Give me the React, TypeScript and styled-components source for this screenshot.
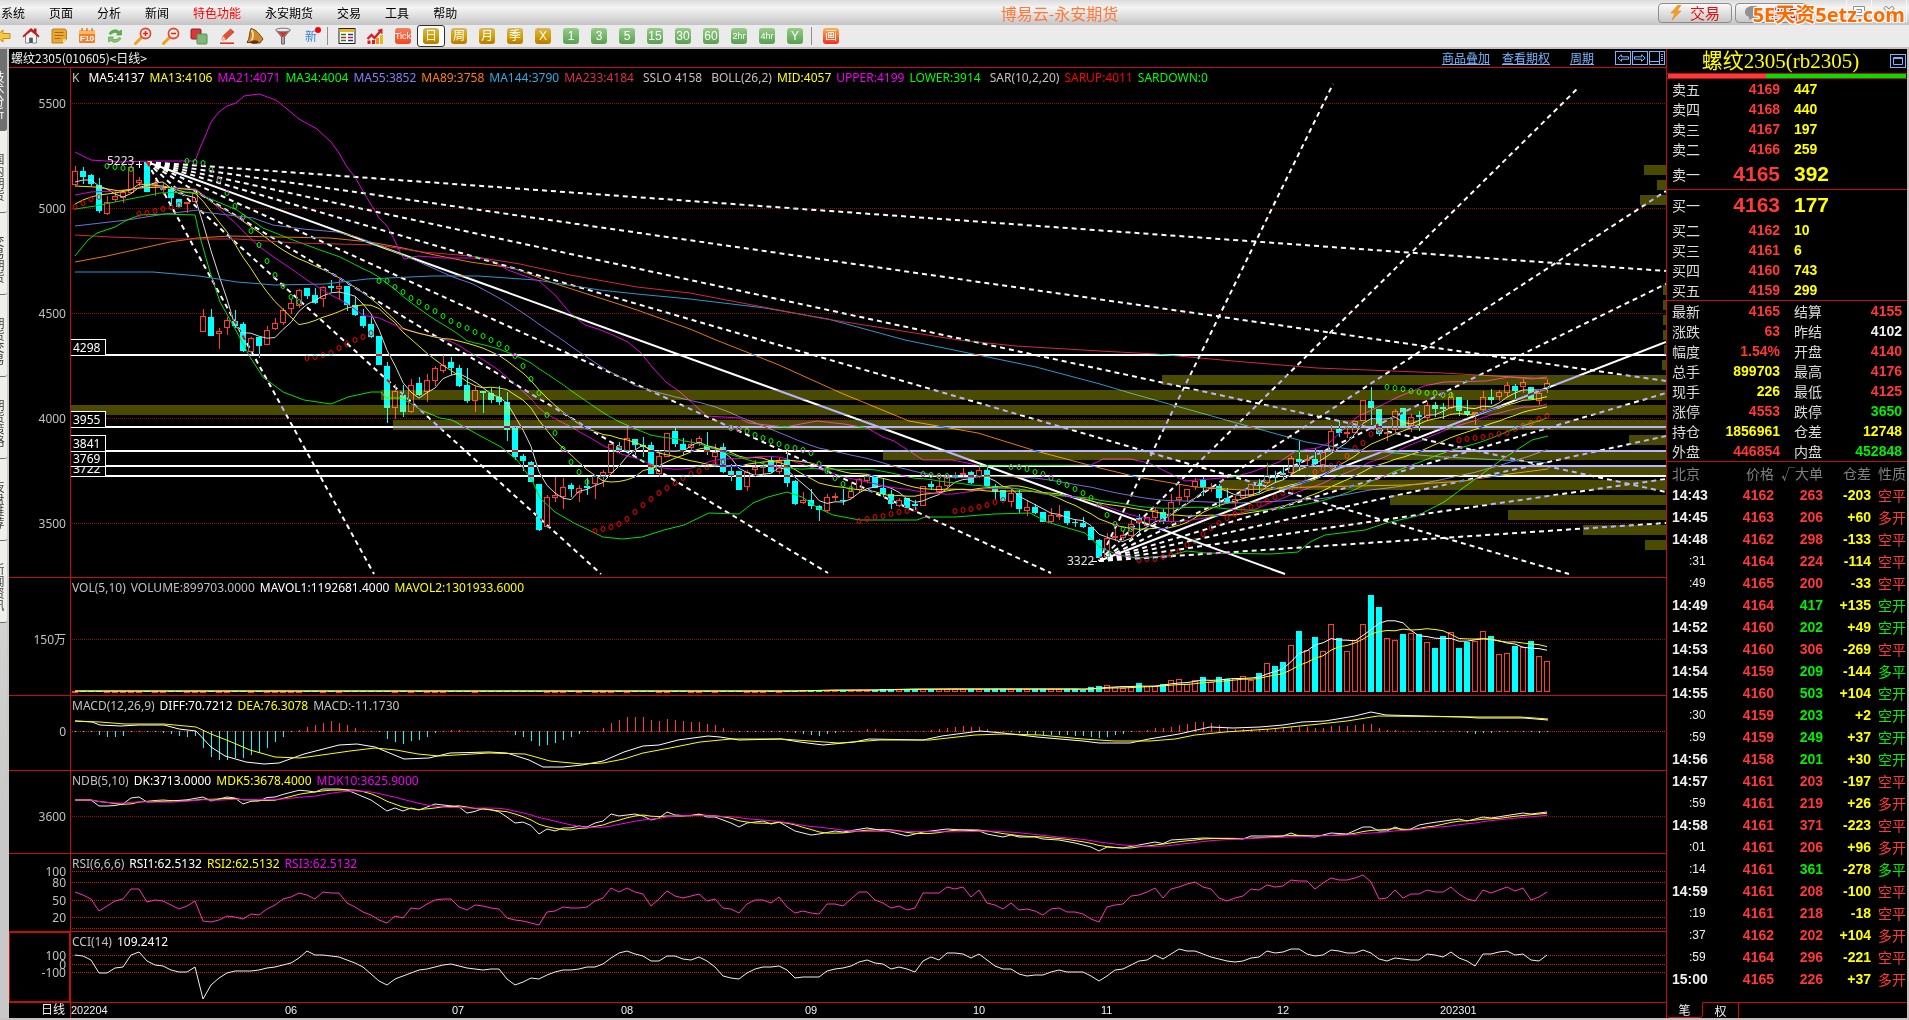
import React from 'react';
import styled, { createGlobalStyle, css } from 'styled-components';

const CJK = "'Noto Sans CJK SC', sans-serif";
const UI = `'Noto Sans', ${CJK}`;
const NUM = `'Liberation Sans', Arial, ${CJK}`;

const C = {
  line: '#c01008',
  red: '#ff3838',
  yellow: '#ffff00',
  green: '#00f000',
  white: '#f0f0f0',
  grey: '#c0c0c0',
  dim: '#808080',
  cyan: '#00ffff',
  magenta: '#f000f0',
  frame: '#c8c0c0',
  link: '#78b4ff',
};

const Global = createGlobalStyle`
  * { box-sizing: border-box; }
  html, body { margin: 0; background: #000; overflow: hidden; }
  button { font: inherit; color: inherit; margin: 0; padding: 0; border: 0; background: none; }
  table { border-collapse: separate; border-spacing: 0; }
`;

/* ---------- frame ---------- */

const Window = styled.div`
  display: flex;
  flex-direction: column;
  height: 100vh;
  color: ${C.white};
  font: 12px/16px ${UI};
  white-space: nowrap;
`;
const TitleBar = styled.header`
  position: relative;
  flex: none;
  display: flex;
  align-items: center;
  height: 25px;
  color: #000;
  font: 12px/16px ${CJK};
  background: linear-gradient(#dcdcdc, #f4f4f4 30%, #e8e8e8 50%, #c4c4c4);
`;
const Menu = styled.nav`
  display: flex;
  gap: 24px;
  padding-left: 1px;
`;
const MenuItem = styled.button<{ $hot?: boolean }>`
  color: ${(p) => (p.$hot ? '#ff0000' : '#000')};
`;
const AppTitle = styled.div`
  flex: 1;
  padding-left: 4px;
  text-align: center;
  font-size: 16px;
  color: #ff7838;
`;
const TopButton = styled.button`
  display: flex;
  align-items: center;
  justify-content: center;
  gap: 8px;
  width: 74px;
  height: 20px;
  margin-right: 3px;
  border: 1px solid #8c8c8c;
  border-radius: 4px;
  background: linear-gradient(#fafafa, #c8c8c8);
  color: #e01010;
  font-size: 15px;
`;
const WinControls = styled.div`
  display: flex;
  margin-left: 10px;
  margin-right: 2px;
  height: 22px;
  align-self: flex-start;
`;
const WinButton = styled.button`
  display: flex;
  align-items: center;
  justify-content: center;
  width: 25px;
  border: 1px solid #f8f8f8;
  border-top: 0;
  border-left: 0;
  &:last-child { width: 35px; }
`;
const Watermark = styled.div`
  position: absolute;
  right: 4px;
  top: 2px;
  font: bold 20px/25px 'Open Sans', ${CJK};
  color: #ff6a00;
  text-shadow: 1px 1px 0 #fff, -1px -1px 0 #fff, 1px -1px 0 #fff, -1px 1px 0 #fff;
  pointer-events: none;
`;

/* ---------- tool bar ---------- */

const ToolBar = styled.div`
  flex: none;
  display: flex;
  align-items: center;
  height: 24px;
  padding-right: 12px;
  overflow: hidden;
  background: #ebebeb;
  border-bottom: 2px solid ${C.frame};
`;
const ToolStart = styled.div`
  display: flex;
  flex: none;
  margin-left: -11px;
`;
const ToolButton = styled.button<{ $on?: boolean }>`
  display: flex;
  align-items: center;
  justify-content: center;
  width: 28px;
  height: 22px;
  ${(p) => p.$on && css`
    border: 1px solid #303030;
    border-radius: 3px;
    background: #fff;
  `}
`;
const Divider = styled.div`
  width: 6px;
  height: 18px;
  margin: 2px 0 0 2px;
  border-left: 1px solid #909090;
`;
const tones = {
  gold: 'linear-gradient(#d8b860, #d0a000 55%, #b87800)',
  green: 'linear-gradient(#98cc88, #58a050)',
  red: 'linear-gradient(#f08060, #f04820)',
  orange: 'linear-gradient(#ffb050, #f03020)',
};
const Tile = styled.span<{ $tone: keyof typeof tones; $small?: boolean }>`
  display: flex;
  align-items: center;
  justify-content: center;
  width: 16px;
  height: 16px;
  border-radius: 3px;
  background: ${(p) => tones[p.$tone]};
  color: #fff;
  font: ${(p) => (p.$small ? '9px' : '12px')}/16px 'Liberation Sans', ${CJK};
`;
const NewMark = styled.span`
  position: relative;
  color: #3c82dc;
  font: 12px/16px ${CJK};
  &::after {
    content: '';
    position: absolute;
    right: -4px;
    top: -1px;
    width: 6px;
    height: 6px;
    border-radius: 50%;
    background: #ff0000;
  }
`;

/* ---------- work area ---------- */

const Work = styled.div`
  flex: 1;
  min-height: 0;
  display: grid;
  grid-template-columns: 9px minmax(0, 1fr) 241px;
  border-right: 2px solid ${C.frame};
  border-bottom: 2px solid ${C.frame};
  background: #000;
`;
const SideBar = styled.nav`
  display: flex;
  flex-direction: column;
  overflow: hidden;
  border-right: 2px solid #c8c8c8;
  background: linear-gradient(#f0f0ea, #c8c8c8 80%);
`;
const SideTab = styled.button<{ $on?: boolean }>`
  flex: none;
  display: flex;
  justify-content: flex-end;
  height: 82px;
  padding: 10px 2px 0 0;
  border-bottom: 1px solid #707070;
  border-bottom-right-radius: 3px;
  background: ${(p) => (p.$on ? '#707070' : '#f0f0ea')};
  color: ${(p) => (p.$on ? '#fff' : '#404040')};
  font: 12px/14px ${CJK};
  & > span { writing-mode: vertical-rl; width: 14px; flex: none; }
`;

const Charts = styled.main`
  display: grid;
  grid-template-rows: 19px 510fr 118fr 75fr 83fr 78fr 71fr 15px;
  min-height: 0;
`;
const ChartHead = styled.div`
  display: flex;
  align-items: center;
  padding: 0 1px 0 2px;
  border-bottom: 1px solid ${C.line};
  font: 12px/16px ${CJK};
`;
const HeadLinks = styled.div`
  display: flex;
  align-items: center;
  margin-left: auto;
  gap: 12px;
`;
const HeadLink = styled.a<{ $wide?: boolean }>`
  color: ${C.link};
  ${(p) => p.$wide && css`margin: 0 9px 0 8px;`}
`;
const BoxButtons = styled.div`
  display: flex;
  gap: 1px;
`;
const BoxButton = styled.button`
  display: flex;
  align-items: center;
  justify-content: center;
  width: 16px;
  height: 14px;
  border: 1px solid ${C.link};
  color: ${C.link};
`;
const Pane = styled.section`
  display: grid;
  grid-template-columns: 62px minmax(0, 1fr);
  min-height: 0;
  border-bottom: 1px solid ${C.line};
`;
const Gutter = styled.div<{ $active?: boolean }>`
  position: relative;
  border-right: 1px solid ${C.line};
  color: ${C.grey};
  ${(p) => p.$active && css`box-shadow: inset 0 0 0 1px ${C.line};`}
`;
const Tick = styled.span`
  position: absolute;
  right: 4px;
  margin-top: -7px;
  line-height: 16px;
`;
const Plot = styled.div`
  position: relative;
  min-width: 0;
  min-height: 0;
  overflow: hidden;
`;
const Canvas = styled.svg`
  position: absolute;
  inset: 0;
  width: 100%;
  height: 100%;
`;
const Inverted = styled.g`
  mix-blend-mode: difference;
`;
const Legend = styled.div`
  position: relative;
  display: flex;
  gap: 5px;
  padding: 2px 0 0 1px;
`;
const Item = styled.span<{ $c?: string; $gap?: boolean }>`
  color: ${(p) => p.$c || C.grey};
  ${(p) => p.$gap && css`margin-left: 4px;`}
`;
const Level = styled.span`
  position: absolute;
  left: 0;
  width: 35px;
  height: 17px;
  margin-top: -16px;
  padding-left: 2px;
  border: 1px solid #fff;
  border-left: 0;
  background: #000;
  line-height: 16px;
  color: #fff;
`;
const Extreme = styled.span`
  position: absolute;
  margin-top: -8px;
  color: #e0e0e0;
  line-height: 16px;
`;
const TimeAxis = styled.div`
  display: grid;
  grid-template-columns: 62px minmax(0, 1fr);
  font: 12px/15px ${NUM};
`;
const PeriodName = styled.div`
  padding-right: 5px;
  border-right: 1px solid ${C.line};
  text-align: right;
`;
const Months = styled.div`
  display: grid;
  grid-template-columns: 214fr 167fr 169fr 184fr 168fr 128fr 176fr 163fr 226fr;
  font-size: 11px;
`;

/* ---------- quote panel ---------- */

const Panel = styled.aside`
  display: flex;
  flex-direction: column;
  min-height: 0;
  border-left: 1px solid ${C.line};
  font: 14px/20px ${CJK};
`;
const PanelTitle = styled.div`
  display: flex;
  align-items: center;
  justify-content: flex-end;
  height: 25px;
  padding-right: 1px;
  border-bottom: 1px solid ${C.line};
`;
const Contract = styled.h1`
  flex: 1;
  margin: 0;
  padding-left: 4px;
  text-align: center;
  font: 21px/24px 'Liberation Serif', ${CJK};
  color: ${C.yellow};
`;
const Balance = styled.div`
  display: flex;
  height: 5px;
  padding: 0 1px;
  border-bottom: 1px solid ${C.line};
`;
const BalancePart = styled.i<{ $c: string; $share: number }>`
  flex: ${(p) => p.$share};
  background: ${(p) => p.$c};
`;
const Sheet = styled.table<{ $line?: boolean }>`
  width: 100%;
  table-layout: fixed;
  ${(p) => p.$line && css`border-bottom: 1px solid ${C.line};`}
`;
const Col = styled.col<{ $w?: number }>`
  ${(p) => p.$w && css`width: ${p.$w}px;`}
`;
const Row = styled.tr<{ $h?: number }>`
  height: ${(p) => p.$h || 20}px;
`;
const Label = styled.th<{ $pad?: number; $c?: string; $right?: boolean }>`
  padding: 0 0 0 ${(p) => p.$pad || 0}px;
  line-height: 18px;
  font-weight: 400;
  text-align: ${(p) => (p.$right ? 'right' : 'left')};
  color: ${(p) => p.$c || '#dcdcdc'};
`;
const Num = styled.td<{ $c: string; $big?: boolean; $left?: boolean; $end?: boolean }>`
  padding: 0 ${(p) => (p.$end ? 5 : 0)}px 0 ${(p) => (p.$left ? 14 : 0)}px;
  font: bold ${(p) => (p.$big ? 21 : 14)}px/18px ${NUM};
  text-align: ${(p) => (p.$left ? 'left' : 'right')};
  color: ${(p) => p.$c};
`;
const Time = styled.td<{ $sub?: boolean }>`
  padding: 0 0 0 ${(p) => (p.$sub ? 22 : 5)}px;
  font: ${(p) => (p.$sub ? '12px' : 'bold 14px')}/18px ${NUM};
  color: ${C.white};
`;
const Kind = styled.td<{ $c: string }>`
  padding: 0 0 0 7px;
  line-height: 18px;
  color: ${(p) => p.$c};
`;
const Tabs = styled.div`
  display: flex;
  height: 16px;
  margin-top: auto;
`;
const Tab = styled.button<{ $on?: boolean }>`
  width: 36px;
  border: 1px solid ${C.line};
  font: 12px/14px ${CJK};
  ${(p) => p.$on ? css`
    border-top-color: transparent;
    border-left: 0;
    border-radius: 0 0 4px 4px;
  ` : css`
    border-bottom: 0;
    border-left: 0;
  `}
`;
const TabRest = styled.div`
  flex: 1;
  border-top: 1px solid ${C.line};
`;

/* ---------- chart data: positions on the chart canvas ---------- */

const X0 = 75;
const STEP = 8;
const xAt = (i: number) => X0 + i * STEP;

// kind, high, body top, body bottom, low
const CANDLES = `r166 171 185 186,c167 171 177 184,c174 175 184 186,c178 185 211 213,r196 202 214 215,r191 196 200 202,r190 192 198 203,r165 167 193 194,r177 180 183 186,c161 162 192 192
r180 183 184 196,r183 188 190 195,c186 189 198 205,c199 199 207 207,r202 202 203 213,r191 193 202 203,r309 316 332 332,c309 317 336 336,r328 331 334 349,r317 320 328 335
c310 321 326 328,c322 324 351 352,r337 338 352 355,c337 337 346 358,r326 330 345 345,r318 323 329 330,r308 310 323 325,r300 303 309 314,r289 290 306 308,c288 288 296 299
c288 295 303 304,r286 287 299 307,c280 286 288 292,r280 286 289 300,c286 286 305 311,c297 305 315 316,c309 316 326 328,c316 324 337 338,c336 336 365 365,c362 366 408 423
r384 391 408 419,c385 395 412 417,r379 385 412 413,c377 383 395 396,r374 380 392 402,r366 368 381 386,r355 365 371 373,c357 362 368 375,c365 368 386 387,c368 385 401 403
r386 390 401 412,c391 391 393 413,c388 393 400 403,c386 397 402 405,c392 402 430 441,c427 428 457 460,c454 456 461 471,c461 462 482 482,c484 484 530 531,r495 497 527 528
r477 495 498 502,r478 487 497 509,c483 485 489 497,r485 488 493 502,c478 486 488 495,r475 476 484 499,r470 472 477 487,r443 444 473 474,c442 446 451 453,r428 438 451 452
c439 439 445 455,c437 445 447 457,c442 445 474 474,r450 456 474 477,r433 433 457 457,c428 431 444 447,c438 444 451 455,r439 444 448 452,r436 438 443 446,c432 446 452 455
r444 452 457 464,c443 447 472 473,c464 471 476 481,c471 471 490 490,r470 472 487 491,r460 467 470 477,r462 466 468 476,c457 460 472 473,r458 461 472 474,c451 460 483 487
c480 481 504 505,r492 500 503 504,c489 500 506 509,c505 506 510 521,r494 497 511 512,r493 496 498 501,c489 500 501 505,r483 491 498 499,r478 479 490 493,r474 476 481 483
c477 477 488 488,c478 488 494 497,c490 494 504 509,r498 500 506 507,c498 498 508 508,c500 504 506 510,r486 486 506 506,c481 484 487 490,r478 486 492 494,r475 477 486 487
r472 475 477 479,r468 473 475 477,c471 472 483 484,r466 470 476 478,c465 470 486 487,c484 486 492 500,c490 490 501 501,r489 493 502 507,c490 493 509 513,r500 507 511 516
c504 507 513 514,c512 512 522 522,r508 515 522 523,r505 515 517 520,c511 511 523 525,c519 522 523 527,c517 523 527 528,c527 527 540 540,c539 540 558 560,r533 538 557 560
r529 536 537 541,r530 535 538 540,r520 524 536 538,c514 518 523 533,r517 517 526 526,r508 510 518 520,c509 512 522 524,r494 502 522 523,r484 497 500 505,r489 489 497 502
r478 481 487 490,c477 480 487 496,r483 487 489 492,c484 486 498 507,c488 498 503 504,r496 499 503 508,r490 490 498 498,r484 484 496 496,c479 483 486 493,r463 475 483 484
c471 477 478 482,c467 473 476 479,r456 458 473 474,c441 459 462 471,r455 459 461 465,c448 459 464 466,r450 452 465 466,r425 431 450 452,c420 429 433 437,r427 432 433 438
r421 421 433 433,r400 400 421 421,c387 401 408 425,c409 409 434 436,r428 432 434 441,r409 411 430 433,c408 408 426 426,r414 417 426 432,c411 415 417 431,r402 405 418 420
c402 405 409 417,c403 407 409 419,r392 397 408 409,c397 397 411 416,c400 411 414 416,r412 412 413 425,r391 397 410 412,c389 397 400 404,r390 392 397 401,r382 385 393 397
c384 386 391 400,r379 382 387 393,c387 387 399 399,r390 393 401 405,r380 383 388 393`
  .split(/[,\n]/)
  .map((s) => {
    const [hi, top, bot, lo] = s.slice(1).split(' ').map(Number);
    return { up: s[0] === 'r', hi, top, bot, lo };
  });
const CLOSES = CANDLES.map((c) => (c.up ? c.top : c.bot));

const average = (v: number[], n: number, from = n - 1) =>
  v.map((_, i) => {
    const part = v.slice(Math.max(0, i - n + 1), i + 1);
    return part.reduce((a, b) => a + b, 0) / part.length;
  }).slice(from);
const series = (v: number[], from = 0) => v.map((y, i) => `${xAt(i + from)},${y.toFixed(1)}`).join(' ');
const maLine = (early: string, n: number) => `${early} ${series(average(CLOSES, n), n - 1)}`;

const CURVES: [string, string][] = [
  ['#d8d8d8', maLine('75,182 83,180 91,180 99,186', 5)],
  ['#e8e800', maLine('75,204 83,200 91,197 99,195 115,193 131,190 139,184 163,186', 13)],
  ['#d800d8', maLine('75,195 91,192 115,191 139,188 150,187 180,188 196,189 213,203 227,216', 21)],
  ['#e8e800', maLine('75,186 95,187 120,191 139,188 160,187 196,190 213,203 237,217 260,233', 26)],
  ['#00d800', maLine('75,209 95,206 125,200 145,196 160,193 190,192 199,194 237,210 263,228 293,240 320,250', 34)],
  ['#7070d8', maLine('75,226 127,220 165,214 198,210 203,212 253,218 273,225 303,229 337,232 357,237 383,247 417,261 453,277 473,284 490,293', 55)],
  ['#e87800', '75,262 107,256 170,242 197,238 230,236 330,238 370,242 403,248 430,254 470,262 513,268 553,283 637,310 690,329 716,340 749,353 779,365 841,393 909,421 978,433 1036,451 1100,468 1137,477 1195,487 1241,490 1310,487 1405,485 1463,481 1509,474 1548,469'],
  ['#2898d0', '75,272 153,272 199,276 237,282 275,285 325,284 367,279 432,276 478,276 536,280 600,290 637,294 690,299 765,308 828,319 905,340 978,355 1036,367 1100,384 1130,393 1233,422 1306,442 1348,449 1443,457 1539,462 1547,463'],
  ['#d02848', '75,235 110,237 170,239 237,239 297,243 377,245 423,252 470,256 520,264 570,275 637,287 690,293 820,318 959,340 1016,346 1100,351 1156,354 1233,361 1317,368 1443,373 1548,379'],
  ['#e000e0', '75,152 91,160 120,162 150,161 195,161 200,148 204,139 211,122 219,112 227,106 236,103 244,96 259,94 276,100 299,119 317,129 331,142 339,153 347,167 355,177 364,193 372,206 379,218 387,226 394,239 399,250 404,259 418,256 443,258 480,258 495,262 508,270 522,275 539,281 555,295 570,313 585,325 598,329 613,335 628,342 641,353 653,368 666,382 680,392 707,416 739,418 749,423 785,427 817,421 844,424 867,428 883,437 894,441 923,460 952,460 982,466 1091,465 1103,459 1130,459 1149,463 1185,481 1233,477 1252,472 1279,462 1296,451 1317,448 1329,443 1344,429 1357,417 1378,407 1398,397 1424,386 1444,382 1486,381 1509,377 1532,379 1547,377'],
  ['#00e000', '75,256 88,240 97,233 115,227 127,220 140,215 165,214 195,215 200,237 210,272 220,302 233,325 250,357 263,377 283,392 304,400 331,404 348,397 371,392 381,392 386,398 402,398 421,410 440,418 452,420 475,433 501,447 517,460 532,480 540,498 555,512 574,523 603,537 622,539 642,537 664,530 684,525 709,513 739,514 753,503 768,497 787,492 802,497 818,508 833,515 860,520 917,520 925,517 955,517 994,514 1030,513 1047,522 1085,533 1100,547 1118,555 1137,558 1168,556 1187,551 1206,553 1271,554 1298,552 1310,542 1325,535 1365,530 1386,523 1417,516 1444,502 1501,460 1532,440 1548,436'],
];

// first bar, falling trend?, marks
const SAR: [number, boolean, number[]][] = [
  [0, false, [207, 203, 199, 197]],
  [4, true, [166, 167, 168, 169]],
  [8, false, [214, 213, 211, 209, 207, 205]],
  [14, true, [161, 162, 163, 170, 180, 193, 206, 217, 231, 245, 261, 275, 286, 297, 302]],
  [29, false, [358, 357, 355, 353, 348, 344, 340, 337, 333]],
  [38, true, [281, 281, 287, 292, 298, 302, 307, 311, 316, 321, 325, 328, 332, 336, 340, 344, 348, 356, 366, 379, 393, 415, 433, 449, 462, 472, 482]],
  [65, false, [531, 529, 527, 524, 519, 512, 505, 499, 493, 488, 483, 478, 474, 471, 467, 464, 462]],
  [82, true, [428, 429, 431, 435, 438, 441, 444, 447, 448, 450, 453, 464, 471, 478, 484, 489]],
  [98, false, [521, 519, 517, 516, 514, 512, 511, 509]],
  [106, true, [474, 475, 476, 476]],
  [110, false, [511, 510, 509, 507, 505, 502, 500]],
  [117, true, [467, 467, 469, 472, 474, 478, 482, 485, 489, 493, 498, 505, 515, 524, 529, 529]],
  [133, false, [560, 559, 559, 557, 555, 551, 545, 541, 534, 528, 523, 518, 514, 510, 507, 504, 501, 497, 493, 491, 485, 478, 472, 469, 466, 464, 456, 448, 443, 434, 430]],
  [164, true, [387, 388, 389, 391, 392, 393, 393, 395, 395]],
  [173, false, [440, 439, 438, 437, 436, 434, 433, 429, 426, 423, 419, 416]],
];

// price distribution: left end and top of each bar
const PROFILE = [
  [1644, 165], [1657, 180], [1640, 195], [1663, 285], [1663, 300], [1663, 315], [1663, 330], [1664, 345], [1662, 360],
  [1162, 375], [381, 390], [71, 405], [393, 420], [1629, 435], [883, 450], [1292, 465], [1220, 480], [1390, 495],
  [1508, 510], [1583, 525], [1645, 540],
];

const FANS: { x: number; y: number; ends: [number, number][] }[] = [
  { x: 147, y: 162, ends: [[1666, 271], [1666, 381], [1666, 492], [1569, 574], [1285, 574], [1051, 573], [828, 573], [601, 574], [374, 574]] },
  { x: 1099, y: 561, ends: [[1333, 84], [1579, 87], [1666, 191], [1666, 284], [1666, 342], [1666, 393], [1666, 436], [1666, 479], [1666, 523]] },
];
const LEVELS: [string, number][] = [['3722', 476], ['3769', 466], ['3841', 451], ['3955', 427], ['4298', 355]];

const VOL_TOPS = [690, 687, 686, 685, 687, 688, 687, 683, 686, 686, 684, 680, 679, 684, 680, 677, 682, 677, 679, 678, 676, 680, 673, 663, 666, 662, 645, 631, 650, 637, 651, 624, 638, 651, 640, 624, 595, 607, 638, 640, 634, 633, 634, 642, 648, 636, 632, 648, 642, 641, 631, 636, 654, 653, 646, 647, 641, 656, 661];
const VOLUME = CANDLES.map((_, i) => {
  if (i >= 126) return VOL_TOPS[i - 126];
  if (i > 100) return 689;
  return i > 90 ? 690 : 691;
});

const MACD_HIST = [-1, -1, -1, -4, -6, -6, -5, -1, 1, -1, -1, -2, -3, -5, -6, -5, -17, -26, -29, -29, -27, -27, -24, -22, -17, -11, -6, -1, 2, 5, 7, 9, 11, 9, 7, 4, 1, 1, -1, -8, -11, -13, -10, -9, -6, -2, 1, 2, 2, 1, 1, 1, 1, 1, 1, -4, -6, -10, -15, -14, -12, -9, -6, -3, -1, 1, 4, 9, 12, 15, 15, 15, 12, 11, 13, 12, 11, 10, 10, 8, 7, 4, 1, -1, -1, -1, -1, -1, -1, -1, -2, -3, -4, -5, -3, -2, -1, -1, 1, 3, 3, 2, 1, 1, 1, 1, 1, 2, 3, 4, 5, 6, 5, 5, 3, 1, 1, -1, -2, -3, -4, -4, -4, -4, -4, -5, -5, -6, -7, -6, -4, -3, -1, 1, 2, 4, 4, 5, 7, 8, 10, 10, 9, 7, 4, 3, 3, 3, 3, 3, 3, 4, 5, 5, 5, 4, 4, 6, 6, 6, 7, 8, 8, 4, 2, 2, 1, 1, -1, 1, -1, -1, 1, -1, -2, -3, -2, -2, -1, -1, 1, -1, -1, -2, -1];
const DIFF = '75,721 92,722 100,725 121,726 139,725 164,725 179,729 196,731 211,747 225,756 246,762 264,764 279,763 304,754 339,745 357,744 375,747 404,759 429,758 450,753 489,752 507,753 529,760 543,767 563,767 582,765 603,761 624,752 643,746 659,745 678,740 708,736 720,737 739,740 781,739 800,742 823,745 854,742 869,739 923,740 942,736 980,731 1003,733 1037,737 1083,741 1099,743 1130,743 1149,739 1179,734 1210,727 1233,728 1260,727 1283,725 1302,722 1325,721 1355,716 1371,712 1386,715 1424,716 1463,717 1478,718 1524,718 1548,720';
const DEA = '75,721 100,722 125,724 164,724 196,727 211,734 229,741 250,750 275,757 300,758 329,754 350,751 375,748 396,750 418,754 439,756 489,753 525,754 550,761 582,764 603,763 624,759 643,753 670,748 700,742 731,739 781,739 810,741 839,743 880,740 930,740 975,735 1003,734 1040,735 1083,739 1115,741 1150,741 1175,739 1195,735 1225,732 1270,729 1310,725 1347,721 1378,716 1480,717 1520,717 1548,719';

const DK_POINTS = '75,800 92,800 99,806 112,806 123,804 131,798 139,797 147,802 170,801 186,800 203,797 211,801 227,797 235,798 243,804 252,801 260,801 268,797 277,797 284,794 300,790 315,792 323,789 340,789 347,790 371,800 387,811 395,808 403,811 411,808 419,810 435,804 460,807 468,814 484,808 500,812 515,823 524,822 532,826 539,834 547,829 555,831 563,828 570,828 579,826 587,827 595,823 603,821 611,814 619,816 635,814 643,816 651,820 659,818 667,812 675,815 690,816 699,814 707,817 715,817 723,820 731,823 739,827 747,823 763,821 771,824 779,822 795,831 811,835 819,834 835,831 843,832 867,828 891,832 907,836 923,832 947,829 980,831 987,834 1003,837 1011,835 1019,837 1035,837 1043,839 1059,840 1075,843 1091,847 1099,851 1107,847 1123,848 1139,845 1155,842 1165,844 1171,840 1203,838 1243,839 1251,836 1283,836 1291,833 1299,836 1315,837 1331,833 1347,834 1363,827 1371,827 1379,831 1387,831 1395,827 1403,830 1411,829 1419,825 1430,823 1459,819 1467,821 1483,817 1491,818 1523,813 1531,814 1547,812'
  .split(' ').map((p) => p.split(',').map(Number));
const DK = CANDLES.map((_, i) => {
  const x = xAt(i);
  const k = Math.max(1, DK_POINTS.findIndex((p) => p[0] >= x));
  const [a, b] = [DK_POINTS[k - 1], DK_POINTS[k]];
  return a[1] + ((b[1] - a[1]) * (x - a[0])) / (b[0] - a[0]);
});

const RSI = [892, 895, 899, 911, 906, 901, 899, 889, 889, 902, 900, 901, 905, 909, 906, 901, 921, 922, 920, 916, 917, 919, 914, 915, 909, 905, 899, 897, 893, 895, 899, 892, 893, 893, 903, 907, 912, 915, 920, 923, 916, 918, 908, 909, 904, 900, 899, 899, 907, 910, 905, 906, 908, 909, 918, 920, 921, 923, 925, 912, 911, 907, 908, 908, 907, 901, 898, 888, 892, 888, 892, 894, 906, 899, 891, 896, 898, 896, 894, 901, 899, 908, 909, 913, 904, 900, 900, 903, 897, 907, 913, 911, 913, 914, 904, 904, 906, 899, 892, 892, 900, 903, 908, 906, 910, 908, 893, 893, 893, 887, 889, 887, 897, 890, 903, 905, 909, 903, 910, 909, 911, 915, 909, 908, 912, 912, 914, 919, 922, 907, 905, 904, 896, 895, 892, 888, 898, 889, 887, 884, 882, 887, 889, 898, 901, 898, 896, 889, 890, 885, 887, 886, 880, 881, 881, 889, 883, 878, 880, 880, 878, 875, 882, 899, 898, 890, 898, 894, 894, 890, 892, 892, 887, 894, 899, 901, 890, 893, 890, 887, 891, 888, 900, 897, 892];
const CCI = [955, 956, 960, 973, 973, 968, 967, 955, 952, 961, 965, 966, 970, 972, 972, 967, 999, 985, 978, 973, 971, 971, 971, 970, 968, 967, 965, 963, 958, 951, 955, 955, 956, 957, 960, 963, 967, 974, 981, 985, 979, 976, 973, 970, 969, 967, 965, 964, 966, 968, 969, 970, 969, 969, 979, 985, 982, 978, 979, 975, 972, 970, 970, 969, 967, 967, 964, 958, 953, 951, 954, 956, 961, 961, 956, 956, 959, 960, 957, 961, 967, 976, 978, 979, 973, 969, 967, 967, 966, 970, 978, 977, 977, 977, 971, 969, 968, 966, 962, 960, 963, 964, 969, 967, 969, 972, 961, 957, 960, 953, 953, 954, 958, 954, 960, 966, 969, 969, 974, 976, 975, 975, 972, 970, 972, 972, 972, 976, 981, 976, 970, 969, 965, 961, 960, 955, 959, 954, 949, 951, 951, 954, 957, 959, 961, 962, 961, 958, 957, 951, 953, 952, 949, 949, 954, 956, 955, 950, 951, 953, 953, 950, 953, 959, 961, 958, 959, 960, 960, 954, 955, 957, 952, 958, 961, 966, 954, 954, 952, 951, 955, 954, 960, 961, 955];

/* ---------- chart pieces ---------- */

const LEFT = 71;
const WIDTH = 1595;

type ChartPaneProps = {
  top: number;
  height: number;
  ticks: [string, number][];
  grid?: number[];
  bright?: boolean;
  active?: boolean;
  legend: React.ReactNode;
  over?: React.ReactNode;
  children: React.ReactNode;
};

function ChartPane({ top, height, ticks, grid, bright, active, legend, over, children }: ChartPaneProps) {
  const share = (y: number) => `${((y - top) / height) * 100}%`;
  return (
    <Pane>
      <Gutter $active={active}>
        {ticks.map(([t, y]) => <Tick key={t} style={{ top: share(y) }}>{t}</Tick>)}
      </Gutter>
      <Plot>
        <Canvas viewBox={`${LEFT} ${top} ${WIDTH} ${height}`} preserveAspectRatio="none">
          {(grid || ticks.map((t) => t[1])).map((y) => (
            <line key={y} x1={LEFT + 1} x2={LEFT + WIDTH} y1={y + 0.5} y2={y + 0.5} stroke={bright ? '#d01808' : '#980808'} strokeDasharray="1 1" shapeRendering="crispEdges" />
          ))}
          {children}
        </Canvas>
        <Legend>{legend}</Legend>
        {over}
      </Plot>
    </Pane>
  );
}

const Curve = ({ c, pts }: { c: string; pts: string }) => <polyline points={pts} fill="none" stroke={c} strokeWidth="1" />;

function PriceChart() {
  const share = (y: number) => `${((y - 68) / 509) * 100}%`;
  const across = (x: number) => `${((x - LEFT) / WIDTH) * 100}%`;
  return (
    <ChartPane
      top={68}
      height={509}
      ticks={[['5500', 103], ['5000', 208], ['4500', 313], ['4000', 418], ['3500', 523]]}
      legend={<>
        <Item>K</Item>
        <Item $c="#fff" $gap>MA5:4137</Item>
        <Item $c={C.yellow}>MA13:4106</Item>
        <Item $c={C.magenta}>MA21:4071</Item>
        <Item $c="#00ff00">MA34:4004</Item>
        <Item $c="#8080f0">MA55:3852</Item>
        <Item $c="#ff8000">MA89:3758</Item>
        <Item $c="#30a8e0">MA144:3790</Item>
        <Item $c="#d83050">MA233:4184</Item>
        <Item $gap>SSLO 4158</Item>
        <Item $gap>BOLL(26,2)</Item>
        <Item $c={C.yellow}>MID:4057</Item>
        <Item $c={C.magenta}>UPPER:4199</Item>
        <Item $c="#00ff00">LOWER:3914</Item>
        <Item $gap>SAR(10,2,20)</Item>
        <Item $c="#ff0000">SARUP:4011</Item>
        <Item $c="#00ff00">SARDOWN:0</Item>
      </>}
      over={<>
        {LEVELS.map(([t, y]) => <Level key={t} style={{ top: share(y) }}>{t}</Level>)}
        <Extreme style={{ left: across(107), top: share(161) }}>5223</Extreme>
        <Extreme style={{ left: across(1067), top: share(561) }}>3322</Extreme>
      </>}
    >
      <g shapeRendering="crispEdges">
        {CANDLES.map((k, i) => {
          const x = xAt(i);
          return k.up ? (
            <g key={i} fill="#ff3c30">
              <rect x={x} y={k.hi} width="1" height={Math.max(0, k.top - k.hi)} />
              <rect x={x} y={k.bot} width="1" height={Math.max(0, k.lo - k.bot)} />
              <rect x={x - 2.5} y={k.top + 0.5} width="5" height={Math.max(1, k.bot - k.top - 1)} fill="none" stroke="#ff3c30" />
            </g>
          ) : (
            <g key={i} fill={C.cyan}>
              <rect x={x} y={k.hi} width="1" height={k.lo - k.hi} />
              <rect x={x - 3} y={k.top} width="6" height={k.bot - k.top} />
            </g>
          );
        })}
      </g>
      {CURVES.map(([c, pts], i) => <Curve key={i} c={c} pts={pts} />)}
      {SAR.map(([from, falling, ys]) => ys.map((y, i) => (
        <ellipse key={`${from}-${i}`} cx={xAt(from + i)} cy={y} rx="2" ry="2.5" fill="none" stroke={falling ? '#00ff00' : '#ff0000'} />
      )))}
      <g fill="#ffff00" fillOpacity="0.29" shapeRendering="crispEdges">
        {PROFILE.map(([x, y]) => <rect key={y} x={x} y={y} width={1666 - x} height="10" />)}
      </g>
      <Inverted stroke="#fff" strokeWidth="2">
        {LEVELS.map(([t, y]) => <line key={t} x1={LEFT} x2="1666" y1={y} y2={y} />)}
        {FANS.map((f) => f.ends.map(([x, y], i) => (
          <line key={`${f.x}-${i}`} x1={f.x} y1={f.y} x2={x} y2={y} strokeDasharray={i === 4 ? undefined : '5 4'} />
        )))}
      </Inverted>
      <path d="M136 164.500h6M139.500 161v7M1091 561.500h6" stroke="#fff" />
    </ChartPane>
  );
}

function VolumeChart() {
  return (
    <ChartPane
      top={578}
      height={117}
      ticks={[['150万', 639]]}
      legend={<>
        <Item>VOL(5,10)</Item><Item>VOLUME:899703.0000</Item>
        <Item $c="#fff">MAVOL1:1192681.4000</Item><Item $c={C.yellow}>MAVOL2:1301933.6000</Item>
      </>}
    >
      <g shapeRendering="crispEdges">
        {VOLUME.map((y, i) => CANDLES[i].up
          ? <rect key={i} x={xAt(i) - 2.5} y={y + 0.5} width="5" height={Math.max(0.5, 691 - y)} fill="none" stroke="#ff3c30" />
          : <rect key={i} x={xAt(i) - 3} y={y} width="6" height={692 - y} fill={C.cyan} />)}
      </g>
      <Curve c="#fff" pts={series(average(VOLUME, 5, 0))} />
      <Curve c="#ffff00" pts={series(average(VOLUME, 10, 0))} />
    </ChartPane>
  );
}

function MacdChart() {
  return (
    <ChartPane
      top={696}
      height={74}
      bright
      ticks={[['0', 731]]}
      legend={<>
        <Item>MACD(12,26,9)</Item><Item $c="#fff">DIFF:70.7212</Item>
        <Item $c={C.yellow}>DEA:76.3078</Item><Item>MACD:-11.1730</Item>
      </>}
    >
      <g shapeRendering="crispEdges">
        {MACD_HIST.map((h, i) => (
          <rect key={i} x={xAt(i)} y={h > 0 ? 732 - h : 731} width="1" height={Math.abs(h)} fill={h > 0 ? '#ff3c30' : C.cyan} />
        ))}
      </g>
      <Curve c="#fff" pts={DIFF} />
      <Curve c="#ffff00" pts={DEA} />
    </ChartPane>
  );
}

function NdbChart() {
  return (
    <ChartPane
      top={771}
      height={82}
      ticks={[['3600', 816]]}
      legend={<>
        <Item>NDB(5,10)</Item><Item $c="#fff">DK:3713.0000</Item>
        <Item $c={C.yellow}>MDK5:3678.4000</Item><Item $c={C.magenta}>MDK10:3625.9000</Item>
      </>}
    >
      <Curve c="#f0f0f0" pts={series(DK)} />
      <Curve c="#ffff00" pts={series(average(DK, 5, 0))} />
      <Curve c="#f000f0" pts={series(average(DK, 10, 0))} />
    </ChartPane>
  );
}

function RsiChart() {
  return (
    <ChartPane
      top={854}
      height={77}
      bright
      ticks={[['100', 871], ['80', 882], ['50', 900], ['20', 917]]}
      grid={[871, 882, 900, 917, 928]}
      legend={<>
        <Item>RSI(6,6,6)</Item><Item $c="#fff">RSI1:62.5132</Item>
        <Item $c={C.yellow}>RSI2:62.5132</Item><Item $c={C.magenta}>RSI3:62.5132</Item>
      </>}
    >
      <Curve c="#ff30b8" pts={series(RSI)} />
    </ChartPane>
  );
}

function CciChart() {
  return (
    <ChartPane
      top={932}
      height={70}
      bright
      active
      ticks={[['100', 955], ['0', 964], ['-100', 972]]}
      legend={<><Item>CCI(14)</Item><Item $c="#fff">109.2412</Item></>}
    >
      <Curve c="#f0f0f0" pts={series(CCI)} />
    </ChartPane>
  );
}

/* ---------- icons ---------- */

const Svg = ({ children, size = 18 }: { children: React.ReactNode; size?: number }) => (
  <svg width={size} height={size} viewBox="0 0 18 18" aria-hidden="true">{children}</svg>
);
const Icons: Record<string, React.ReactNode> = {
  后退: <Svg><path d="M2 9l7-6v3.500h7v5H9V15z" fill="#f8c840" stroke="#c88810" /></Svg>,
  首页: <Svg><path d="M3.500 8v8h4v-5h3v5h4V8L9 4z" fill="#f4f4f4" stroke="#888" /><path d="M12 1.500h2.500V6L17.500 9l-1 1.500L9 4l-7.500 6.500-1-1.500L9 1l3 2.500z" fill="#c81818" /><path d="M7.500 11h3v5h-3z" fill="#505868" /></Svg>,
  公告: <Svg><path d="M3 2h12l1.500 1.500v9L13 16H2V3z" fill="#e8a838" stroke="#c08010" /><path d="M4.500 5.500h9M4.500 8.500h9M4.500 11.500h6" stroke="#b06808" /><path d="M13 16v-3.500h3.500" fill="#fff0c0" /></Svg>,
  F10: <Svg><rect x="1" y="3" width="16" height="13" rx="1" fill="#f08030" /><path d="M1 3h16v4H1z" fill="#ffb860" /><path d="M4 1v3M9 1v3M14 1v3" stroke="#b05010" /><text x="9" y="13.500" fontSize="8" fontWeight="bold" fontFamily="Liberation Sans" fill="#fff" textAnchor="middle">F10</text></Svg>,
  刷新: <Svg><path d="M3 6.500C6 2 11 2 13 4.500l2.500-1.500v5h-5l1.500-1.500C10 5 7 5 5 7.500z" fill="#60b048" stroke="#3c8830" strokeWidth=".5" /><path d="M15 11.500c-3 4.500-8 4.500-10 2L2.500 15v-5h5L6 11.500c2 1.500 5 1.500 7-1z" fill="#80c868" stroke="#3c8830" strokeWidth=".5" /></Svg>,
  放大: <Svg><path d="M1.500 16.500l6-6" stroke="#f0a020" strokeWidth="3" strokeLinecap="round" /><circle cx="11.500" cy="6.500" r="5" fill="#fff4f0" stroke="#e84830" strokeWidth="1.800" /><path d="M9 6.500h5M11.500 4v5" stroke="#e02010" strokeWidth="1.600" /></Svg>,
  缩小: <Svg><path d="M1.500 16.500l6-6" stroke="#f0a020" strokeWidth="3" strokeLinecap="round" /><circle cx="11.500" cy="6.500" r="5" fill="#fff4f0" stroke="#e84830" strokeWidth="1.800" /><path d="M9 6.500h5" stroke="#e02010" strokeWidth="1.600" /></Svg>,
  叠加: <Svg><rect x="1" y="2" width="10" height="10" rx="1" fill="#d83838" stroke="#902020" /><rect x="7" y="7" width="10" height="10" rx="1" fill="#80b878" stroke="#509050" /></Svg>,
  画线: <Svg><path d="M4 13l1-4 7.500-7 3.500 3-8 7.500z" fill="#e85030" stroke="#a03018" strokeWidth=".6" /><path d="M4 13l1-4 3 3.500z" fill="#f8d8a0" /><path d="M2 16.200h14" stroke="#e03818" strokeWidth="1.600" /></Svg>,
  预警: <Svg><path d="M5 1.500c5 1 8 5 12 10.500l-3 4-13-.5C4 12 3 6 5 1.500z" fill="#d08830" stroke="#704010" /><path d="M5.500 3c2 3 2 7 0 11" stroke="#ffe090" strokeWidth="1.800" fill="none" /><ellipse cx="8.500" cy="15" rx="4" ry="1.800" fill="#603010" /></Svg>,
  筛选: <Svg><path d="M2 3l5.500 7v7h3v-7L16 3z" fill="#a8a8a8" stroke="#686868" /><path d="M4.500 5h9l-4 5h-1z" fill="#d83030" /><ellipse cx="9" cy="3" rx="7.500" ry="1.800" fill="#e8e8e8" stroke="#787878" /></Svg>,
  报价: <Svg><rect x="1" y="1.500" width="16" height="15" fill="#fff" stroke="#202020" /><path d="M1.500 2h15v3h-15z" fill="#e8b820" /><path d="M3 7.500h5M3 13.500h5" stroke="#208020" strokeWidth="1.400" /><path d="M3 10.500h5M10 10.500h5" stroke="#c02020" strokeWidth="1.400" /><path d="M10 7.500h5M10 13.500h5" stroke="#2030a0" strokeWidth="1.400" /></Svg>,
  走势: <Svg><path d="M1.500 12l4-4 3 3 6-7" stroke="#d82020" strokeWidth="2.400" fill="none" /><path d="M16.500 1.500v6l-5-4.500z" fill="#d82020" /><path d="M1.500 13.500h3V17h-3zM6 13h3v4H6z" fill="#d82020" /><path d="M10 11h3v6h-3z" fill="#f09020" /><path d="M14 8h3v9h-3z" fill="#d8c020" /></Svg>,
};

const PERIODS: [string, keyof typeof tones, boolean?][] = [
  ['日', 'gold'], ['周', 'gold'], ['月', 'gold'], ['季', 'gold'], ['X', 'gold'],
  ['1', 'green'], ['3', 'green'], ['5', 'green'], ['15', 'green'], ['30', 'green'], ['60', 'green'],
  ['2hr', 'green', true], ['4hr', 'green', true], ['Y', 'green'],
];

function Tools() {
  const first = ['后退', '首页', '公告', 'F10', '刷新', '放大', '缩小', '叠加', '画线', '预警', '筛选'];
  return (
    <ToolBar>
      <ToolStart>
        {first.map((n) => <ToolButton key={n} aria-label={n}>{Icons[n]}</ToolButton>)}
        <ToolButton><NewMark>新</NewMark></ToolButton>
        <Divider />
        {['报价', '走势'].map((n) => <ToolButton key={n} aria-label={n}>{Icons[n]}</ToolButton>)}
        <ToolButton><Tile $tone="red" $small>Tick</Tile></ToolButton>
        {PERIODS.map(([t, tone, small], i) => (
          <ToolButton key={t} $on={i === 0}><Tile $tone={tone} $small={small}>{t}</Tile></ToolButton>
        ))}
        <Divider />
        <ToolButton><Tile $tone="orange">画</Tile></ToolButton>
      </ToolStart>
    </ToolBar>
  );
}

/* ---------- quote data ---------- */

const ASKS = [['卖五', '4169', '447'], ['卖四', '4168', '440'], ['卖三', '4167', '197'], ['卖二', '4166', '259'], ['卖一', '4165', '392']];
const BIDS = [['买一', '4163', '177'], ['买二', '4162', '10'], ['买三', '4161', '6'], ['买四', '4160', '743'], ['买五', '4159', '299']];
const { red: R, yellow: Y, green: G, white: W } = C;
const STATS = [
  ['最新', '4165', R, '结算', '4155', R], ['涨跌', '63', R, '昨结', '4102', W],
  ['幅度', '1.54%', R, '开盘', '4140', R], ['总手', '899703', Y, '最高', '4176', R],
  ['现手', '226', Y, '最低', '4125', R], ['涨停', '4553', R, '跌停', '3650', G],
  ['持仓', '1856961', Y, '仓差', '12748', Y], ['外盘', '446854', R, '内盘', '452848', G],
];
const TRADES = `14:43 4162 263 -203 空平 r
14:45 4163 206 +60 多开 r
14:48 4162 298 -133 空平 r
:31 4164 224 -114 空平 r
:49 4165 200 -33 空平 r
14:49 4164 417 +135 空开 g
14:52 4160 202 +49 空开 g
14:53 4160 306 -269 空平 r
14:54 4159 209 -144 多平 g
14:55 4160 503 +104 空开 g
:30 4159 203 +2 空开 g
:59 4159 249 +37 空开 g
14:56 4158 201 +30 空开 g
14:57 4161 203 -197 空平 r
:59 4161 219 +26 多开 r
14:58 4161 371 -223 空平 r
:01 4161 206 +96 多开 r
:14 4161 361 -278 多平 g
14:59 4161 208 -100 空平 r
:19 4161 218 -18 空平 r
:37 4162 202 +104 多开 r
:59 4164 296 -221 空平 r
15:00 4165 226 +37 多开 r`.split('\n').map((l) => l.split(' '));

function Depth({ rows, best }: { rows: string[][]; best: string }) {
  return (
    <Sheet $line>
      <colgroup><Col $w={46} /><Col $w={67} /><Col /></colgroup>
      <tbody>
        {rows.map(([n, p, v]) => (
          <Row key={n} $h={n === best ? 30 : 20}>
            <Label scope="row" $pad={5}>{n}</Label>
            <Num $c={R} $big={n === best}>{p}</Num>
            <Num $c={Y} $big={n === best} $left>{v}</Num>
          </Row>
        ))}
      </tbody>
    </Sheet>
  );
}

function QuotePanel() {
  return (
    <Panel>
      <PanelTitle>
        <Contract>螺纹2305(rb2305)</Contract>
        <BoxButton aria-label="最大化">
          <svg width="10" height="8" viewBox="0 0 10 8"><path d="M.5 .5h9v7h-9zM.5 1.500h9" fill="none" stroke="currentColor" /></svg>
        </BoxButton>
      </PanelTitle>
      <Balance><BalancePart $c="#ff3838" $share={98} /><BalancePart $c="#00e000" $share={140} /></Balance>
      <Depth rows={ASKS} best="卖一" />
      <Depth rows={BIDS} best="买一" />
      <Sheet $line>
        <colgroup><Col $w={46} /><Col $w={67} /><Col $w={60} /><Col /></colgroup>
        <tbody>
          {STATS.map(([a, av, ac, b, bv, bc]) => (
            <Row key={a}>
              <Label scope="row" $pad={5}>{a}</Label><Num $c={ac}>{av}</Num>
              <Label scope="row" $pad={14}>{b}</Label><Num $c={bc} $end>{bv}</Num>
            </Row>
          ))}
        </tbody>
      </Sheet>
      <Sheet>
        <colgroup><Col $w={57} /><Col $w={50} /><Col $w={49} /><Col $w={48} /><Col /></colgroup>
        <thead>
          <Row $h={22}>
            <Label $pad={5} $c={C.dim}>北京</Label>
            <Label $c={C.dim} $right>价格</Label>
            <Label $c={C.dim} $right>√大单</Label>
            <Label $c={C.dim} $right>仓差</Label>
            <Label $pad={7} $c={C.dim}>性质</Label>
          </Row>
        </thead>
        <tbody>
          {TRADES.map(([t, p, v, d, k, c], i) => {
            const tone = c === 'r' ? R : G;
            return (
              <Row key={i} $h={22}>
                <Time $sub={t[0] === ':'}>{t}</Time>
                <Num $c={R}>{p}</Num><Num $c={tone}>{v}</Num><Num $c={Y}>{d}</Num>
                <Kind $c={tone}>{k}</Kind>
              </Row>
            );
          })}
        </tbody>
      </Sheet>
      <Tabs><Tab $on>笔</Tab><Tab>权</Tab><TabRest /></Tabs>
    </Panel>
  );
}

const MENU = ['系统', '页面', '分析', '新闻', '特色功能', '永安期货', '交易', '工具', '帮助'];
const SIDE = ['技术分析', '国内期货', '交易期货', '期货交易', '期货策略', '夜盘推荐', '新闻资讯'];
const MONTHS = ['202204', '06', '07', '08', '09', '10', '11', '12', '202301'];

export default function App() {
  return (
    <Window>
      <Global />
      <TitleBar>
        <Menu>{MENU.map((m) => <MenuItem key={m} $hot={m === '特色功能'}>{m}</MenuItem>)}</Menu>
        <AppTitle>博易云-永安期货</AppTitle>
        <TopButton>
          <svg width="12" height="15" viewBox="0 0 12 15"><path d="M8 0L1 8h4l-3 7 9-9H7l4-6z" fill="#f8a020" stroke="#d07810" strokeWidth=".5" /></svg>
          交易
        </TopButton>
        <TopButton>
          <svg width="16" height="14" viewBox="0 0 16 14"><path d="M8 0c5 0 8 2.500 8 6s-3 6-8 6l-4 2v-3C1 10 0 8 0 6c0-3.500 3-6 8-6z" fill="#909090" /></svg>
          咨询
        </TopButton>
        <WinControls>
          <WinButton aria-label="最小化"><svg width="12" height="10" viewBox="0 0 12 10"><rect x=".5" y="5.500" width="11" height="3" fill="#fff" stroke="#909090" /></svg></WinButton>
          <WinButton aria-label="还原"><svg width="12" height="10" viewBox="0 0 12 10"><path d="M.5 .5h11v9H.5zM3.500 3.500h5v3h-5z" fill="#fff" fillRule="evenodd" stroke="#909090" /></svg></WinButton>
          <WinButton aria-label="关闭"><svg width="12" height="10" viewBox="0 0 12 10"><path d="M1.500 1l9 8M10.500 1l-9 8" stroke="#909090" strokeWidth="4" /><path d="M2 1.500l8 7M10 1.500l-8 7" stroke="#fff" strokeWidth="2" /></svg></WinButton>
        </WinControls>
        <Watermark>5E天资5etz.com</Watermark>
      </TitleBar>
      <Tools />
      <Work>
        <SideBar>{SIDE.map((s, i) => <SideTab key={s} $on={i === 0}><span>{s}</span></SideTab>)}</SideBar>
        <Charts>
          <ChartHead>
            <span>螺纹2305(010605)&lt;日线&gt;</span>
            <HeadLinks>
              <HeadLink href="#overlay">商品叠加</HeadLink>
              <HeadLink href="#options">查看期权</HeadLink>
              <HeadLink href="#period" $wide>周期</HeadLink>
              <BoxButtons>
                <BoxButton aria-label="上一个"><svg width="12" height="8" viewBox="0 0 12 8"><path d="M.8 4L4.500 .8v2h7v2.400h-7v2z" fill="none" stroke="currentColor" /></svg></BoxButton>
                <BoxButton aria-label="下一个"><svg width="12" height="8" viewBox="0 0 12 8"><path d="M11.200 4L7.500 .8v2h-7v2.400h7v2z" fill="none" stroke="currentColor" /></svg></BoxButton>
                <BoxButton aria-label="布局"><svg width="14" height="12" viewBox="0 0 14 12"><path d="M9.500 0v12M0 9.500h9.500M11 2.500h2M11 4.500h2M11 6.500h2M11 8.500h2" fill="none" stroke="currentColor" /></svg></BoxButton>
              </BoxButtons>
            </HeadLinks>
          </ChartHead>
          <PriceChart />
          <VolumeChart />
          <MacdChart />
          <NdbChart />
          <RsiChart />
          <CciChart />
          <TimeAxis>
            <PeriodName>日线</PeriodName>
            <Months>{MONTHS.map((m) => <span key={m}>{m}</span>)}</Months>
          </TimeAxis>
        </Charts>
        <QuotePanel />
      </Work>
    </Window>
  );
}
